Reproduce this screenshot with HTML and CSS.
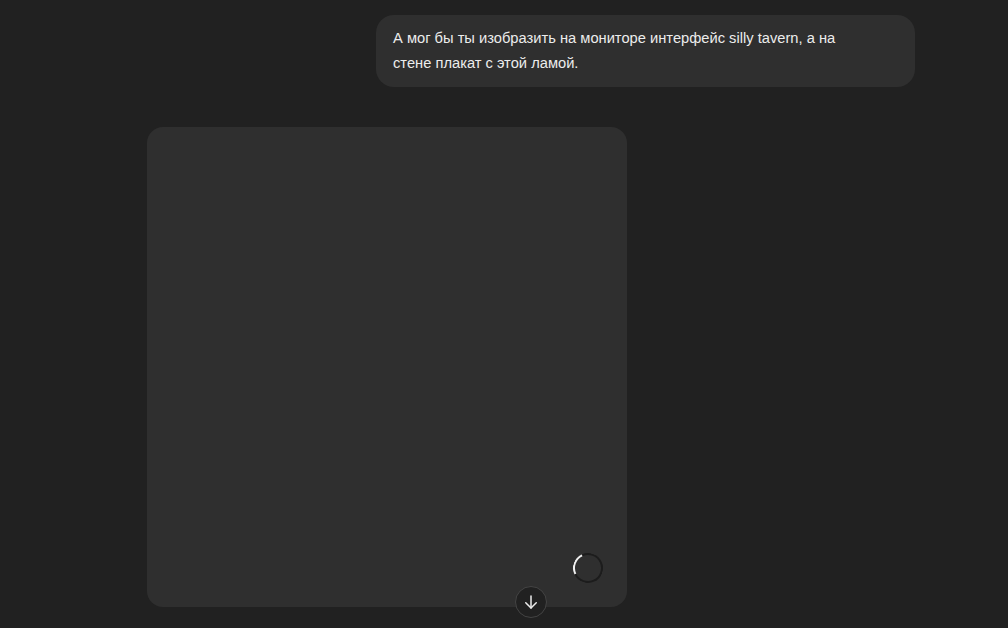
FILE: index.html
```html
<!DOCTYPE html>
<html lang="ru">
<head>
    <meta charset="UTF-8">
    <meta name="viewport" content="width=device-width, initial-scale=1.0">
    <title>Chat</title>
    <link rel="stylesheet" href="styles.css">
</head>
<body>
    <div class="thread">
        <div class="user-row">
            <div class="user-bubble">А мог бы ты изобразить на мониторе интерфейс silly tavern, а на стене плакат с этой ламой.</div>
        </div>
        <div class="assistant-row">
            <div class="image-card">
                <div class="spinner"></div>
            </div>
        </div>
    </div>
    <button class="scroll-down" aria-label="Scroll down">
        <svg width="18" height="18" viewBox="0 0 24 24" fill="none" stroke="#ececec" stroke-width="2" stroke-linecap="round" stroke-linejoin="round">
            <path d="M12 4v16"/>
            <path d="M5 13l7 7 7-7"/>
        </svg>
    </button>
</body>
</html>
```

FILE: styles.css
```css
body {
    margin: 0;
    padding: 0;
    background-color: #212121;
    font-family: "Liberation Sans", Arial, sans-serif;
    color: #ececec;
    height: 628px;
    overflow: hidden;
}

.thread {
    width: 768px;
    margin-left: 147px;
    padding-top: 15px;
}

.user-row {
    display: flex;
    justify-content: flex-end;
}

.user-bubble {
    width: 456px;
    background-color: #2f2f2f;
    border-radius: 18px;
    padding: 11px 66px 11px 17px;
    font-size: 14.7px;
    line-height: 25px;
}

.assistant-row {
    margin-top: 40px;
}

.image-card {
    position: relative;
    width: 480px;
    height: 480px;
    background-color: #2f2f2f;
    border-radius: 16px;
}

.spinner {
    position: absolute;
    right: 24px;
    bottom: 24px;
    width: 26px;
    height: 26px;
    border: 2px solid #1c1c1c;
    border-left-color: #f0f0f0;
    border-radius: 50%;
    transform: rotate(20deg);
}

.scroll-down {
    position: absolute;
    left: 515px;
    top: 586px;
    width: 32px;
    height: 32px;
    border-radius: 50%;
    border: 1px solid #444;
    background-color: #212121;
    display: flex;
    align-items: center;
    justify-content: center;
    padding: 0;
}
```
